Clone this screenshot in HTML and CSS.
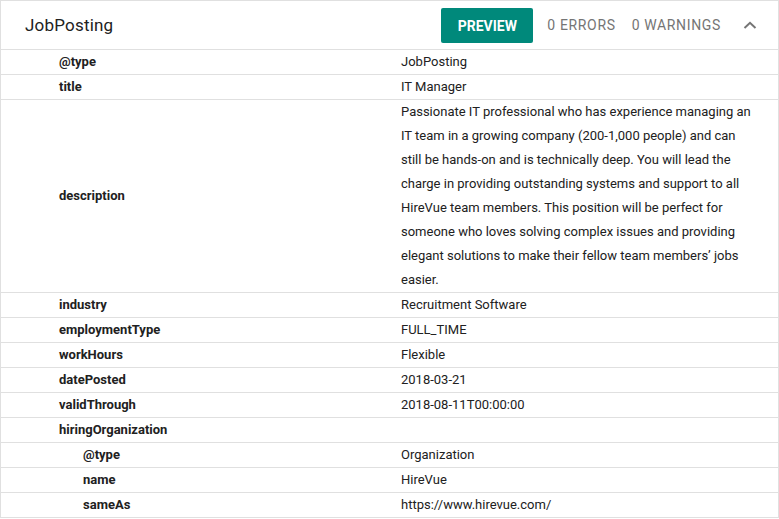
FILE: index.html
```html
<!DOCTYPE html>
<html>
<head>
<meta charset="utf-8">
<link rel="stylesheet" href="styles.css">
</head>
<body>
<div class="card">
  <div class="header">
    <div class="title">JobPosting</div>
    <div class="actions">
      <button class="preview">PREVIEW</button>
      <span class="count">0 ERRORS</span>
      <span class="count">0 WARNINGS</span>
      <svg class="chevron" width="14" height="8" viewBox="0 0 14 8"><polyline points="1.5,7 7,1.8 12.5,7" fill="none" stroke="#757575" stroke-width="2"/></svg>
    </div>
  </div>
  <div class="row"><div class="key">@type</div><div class="val">JobPosting</div></div>
  <div class="row"><div class="key">title</div><div class="val">IT Manager</div></div>
  <div class="row"><div class="key">description</div><div class="val">Passionate IT professional who has experience managing an IT team in a growing company (200-1,000 people) and can still be hands-on and is technically deep. You will lead the charge in providing outstanding systems and support to all HireVue team members. This position will be perfect for someone who loves solving complex issues and providing elegant solutions to make their fellow team members’ jobs easier.</div></div>
  <div class="row"><div class="key">industry</div><div class="val">Recruitment Software</div></div>
  <div class="row"><div class="key">employmentType</div><div class="val">FULL_TIME</div></div>
  <div class="row"><div class="key">workHours</div><div class="val">Flexible</div></div>
  <div class="row"><div class="key">datePosted</div><div class="val">2018-03-21</div></div>
  <div class="row"><div class="key">validThrough</div><div class="val">2018-08-11T00:00:00</div></div>
  <div class="row"><div class="key">hiringOrganization</div><div class="val"></div></div>
  <div class="row"><div class="key nested">@type</div><div class="val">Organization</div></div>
  <div class="row"><div class="key nested">name</div><div class="val">HireVue</div></div>
  <div class="row"><div class="key nested">sameAs</div><div class="val">https://www.hirevue.com/</div></div>
</div>
</body>
</html>
```

FILE: styles.css
```css
html, body {
  margin: 0;
  padding: 0;
  background: #fff;
}
body {
  font-family: Roboto, "Liberation Sans", Arial, sans-serif;
  color: #212121;
}
.card {
  border: 1px solid #e0e0e0;
  border-bottom: none;
  width: 779px;
  box-sizing: border-box;
}
.header {
  height: 48px;
  border-bottom: 1px solid #e0e0e0;
  display: flex;
  align-items: center;
  justify-content: space-between;
  padding: 0 21px 0 24px;
}
.title {
  font-size: 17px;
  letter-spacing: 0.2px;
  color: #212121;
}
.actions {
  display: flex;
  align-items: center;
}
.preview {
  background: #00897b;
  color: #fff;
  border: none;
  border-radius: 2px;
  width: 92px;
  height: 35px;
  font-family: Roboto, "Liberation Sans", Arial, sans-serif;
  font-weight: 700;
  font-size: 14px;
  padding: 0;
  margin-right: 14px;
  margin-top: 1px;
}
.count {
  font-size: 14px;
  color: #757575;
  letter-spacing: 0.65px;
  margin-right: 16px;
}
.count + .count {
  margin-right: 22px;
}
.chevron {
  display: block;
}
.row {
  display: grid;
  grid-template-columns: 400px 1fr;
  align-items: center;
  border-bottom: 1px solid #e0e0e0;
  font-size: 13px;
  line-height: 24px;
}
.key {
  font-weight: 700;
  padding-left: 58px;
}
.key.nested {
  padding-left: 82px;
}
.val {
  padding-right: 20px;
}
```
